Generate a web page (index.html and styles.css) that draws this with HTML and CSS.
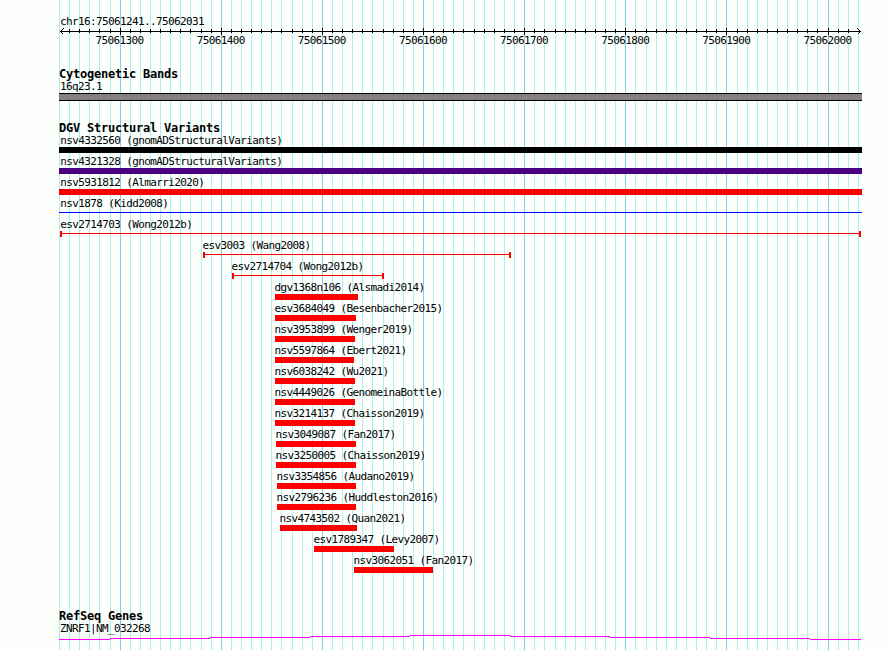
FILE: index.html
```
<!DOCTYPE html>
<html lang="en">
<head>
    <meta charset="UTF-8">
    <title>chr16:75061241..75062031</title>
    <link rel="stylesheet" href="styles.css">
</head>
<body>
    <svg class="grid" id="grid" width="890" height="650"></svg>

    <div class="browser">
        <div class="ruler">
            <div class="label position">chr16:75061241..75062031</div>
            <svg class="axis" id="axis" width="803" height="9"></svg>
            <div class="scale label">
                <span>75061300</span><span>75061400</span><span>75061500</span><span>75061600</span><span>75061700</span><span>75061800</span><span>75061900</span><span>75062000</span>
            </div>
        </div>

        <div class="track cyto">
            <h2>Cytogenetic Bands</h2>
            <div class="label">16q23.1</div>
            <div class="band"></div>
        </div>

        <div class="track variants">
            <h2>DGV Structural Variants</h2>
            <div id="variants"></div>
        </div>

        <div class="track genes">
            <h2>RefSeq Genes</h2>
            <div class="label">ZNRF1|NM_032268</div>
            <svg class="gene" width="803" height="8">
                <path d="M0 6.5H51M51 5.5H151M151 4.5H251M251 3.5H351M351 2.5H451M451 3.5H551M551 4.5H651M651 5.5H751M751 6.5H802"/>
            </svg>
        </div>
    </div>

    <script>
        // name, start, end (pixels from the left edge of the panel), type
        const variants = [
            ["nsv4332560 (gnomADStructuralVariants)", 0, 803, "black"],
            ["nsv4321328 (gnomADStructuralVariants)", 0, 803, "purple"],
            ["nsv5931812 (Almarri2020)", 0, 803, "red"],
            ["nsv1878 (Kidd2008)", 0, 803, "line"],
            ["esv2714703 (Wong2012b)", 1, 802, "span"],
            ["esv3003 (Wang2008)", 144, 452, "span"],
            ["esv2714704 (Wong2012b)", 173, 325, "span"],
            ["dgv1368n106 (Alsmadi2014)", 216, 299, "red"],
            ["esv3684049 (Besenbacher2015)", 216, 297, "red"],
            ["nsv3953899 (Wenger2019)", 216, 296, "red"],
            ["nsv5597864 (Ebert2021)", 216, 295, "red"],
            ["nsv6038242 (Wu2021)", 216, 296, "red"],
            ["nsv4449026 (GenomeinaBottle)", 216, 296, "red"],
            ["nsv3214137 (Chaisson2019)", 216, 296, "red"],
            ["nsv3049087 (Fan2017)", 217, 297, "red"],
            ["nsv3250005 (Chaisson2019)", 217, 297, "red"],
            ["nsv3354856 (Audano2019)", 218, 297, "red"],
            ["nsv2796236 (Huddleston2016)", 218, 297, "red"],
            ["nsv4743502 (Quan2021)", 221, 298, "red"],
            ["esv1789347 (Levy2007)", 255, 335, "red"],
            ["nsv3062051 (Fan2017)", 295, 374, "red"]
        ];

        document.getElementById("variants").innerHTML = variants.map(([name, start, end, type]) => {
            const labelX = Math.max(1.3, start - 0.6);
            return `<div class="variant">
                <div class="label" style="margin-left:${labelX}px">${name}</div>
                <div class="bar ${type}" style="margin-left:${start}px;width:${end - start}px"></div>
            </div>`;
        }).join("");

        // one line every 10 bp, a darker one every 100 bp
        let lines = "";
        let ticks = "";
        for (let k = -6; k <= 73; k++) {
            const x = Math.floor(120.12 + k * 10.114);
            const major = k % 10 === 0;
            lines += `<rect class="${major ? "major" : "minor"}" x="${x}" y="0" width="1" height="650"/>`;
            if (k > -6 && k < 73) {
                ticks += major ? `<path d="M${x - 58.5} 1V8"/>` : `<path d="M${x - 58.5} 2V6"/>`;
            }
        }
        document.getElementById("grid").innerHTML = lines;
        document.getElementById("axis").innerHTML = ticks +
            '<path d="M1 4.5H802"/><path class="arrow" d="M4.5 1.5L1.5 4.5L4.5 7.5M798.5 1.5L801.5 4.5L798.5 7.5"/>';
    </script>
</body>
</html>
```
FILE: styles.css
```
body {
    margin: 0;
    height: 650px;
    overflow: hidden;
    background: #fdfffc;
    color: #000;
    font-family: "DejaVu Sans Mono", monospace;
}
.grid {
    position: absolute;
    top: 0;
    left: 0;
    z-index: -1;
}
.minor {
    fill: #afeeee;
}
.major {
    fill: #87ceeb;
}
.browser {
    width: 803px;
    padding: 16px 0 0 59px;
}
.label {
    height: 12px;
    margin-left: 1px;
    font-size: 11px;
    line-height: 12px;
    letter-spacing: -0.622px;
    white-space: pre;
}
.position {
    height: 11px;
}
h2 {
    height: 13px;
    margin: 0;
    font-size: 12px;
    line-height: 13px;
    letter-spacing: -0.224px;
}
svg {
    display: block;
}
.axis path {
    fill: none;
    stroke: #000;
    shape-rendering: crispEdges;
}
.scale {
    display: flex;
    gap: 53.14px;
    margin: -1px 0 0 36.5px;
}
.scale span {
    width: 48px;
}
.cyto {
    margin-top: 21px;
}
.band {
    height: 6px;
    border-top: 1px solid #000;
    border-bottom: 1px solid #000;
    background: #848084;
}
.variants {
    margin-top: 21px;
}
.variant {
    height: 21px;
}
.bar {
    height: 6px;
}
.black {
    background: #000;
}
.purple {
    background: #4b0082;
}
.red {
    background: #f00;
}
.line {
    height: 1px;
    margin-top: 2px;
    background: #00f;
}
.span {
    box-sizing: border-box;
    border: solid #f00;
    border-width: 0 2px;
    background: linear-gradient(#f00, #f00) 0 2px / 100% 1px no-repeat;
}
.genes {
    margin-top: 34px;
}
.gene {
    margin-top: -2px;
}
.gene path {
    fill: none;
    stroke: #f0f;
    shape-rendering: crispEdges;
}
```
